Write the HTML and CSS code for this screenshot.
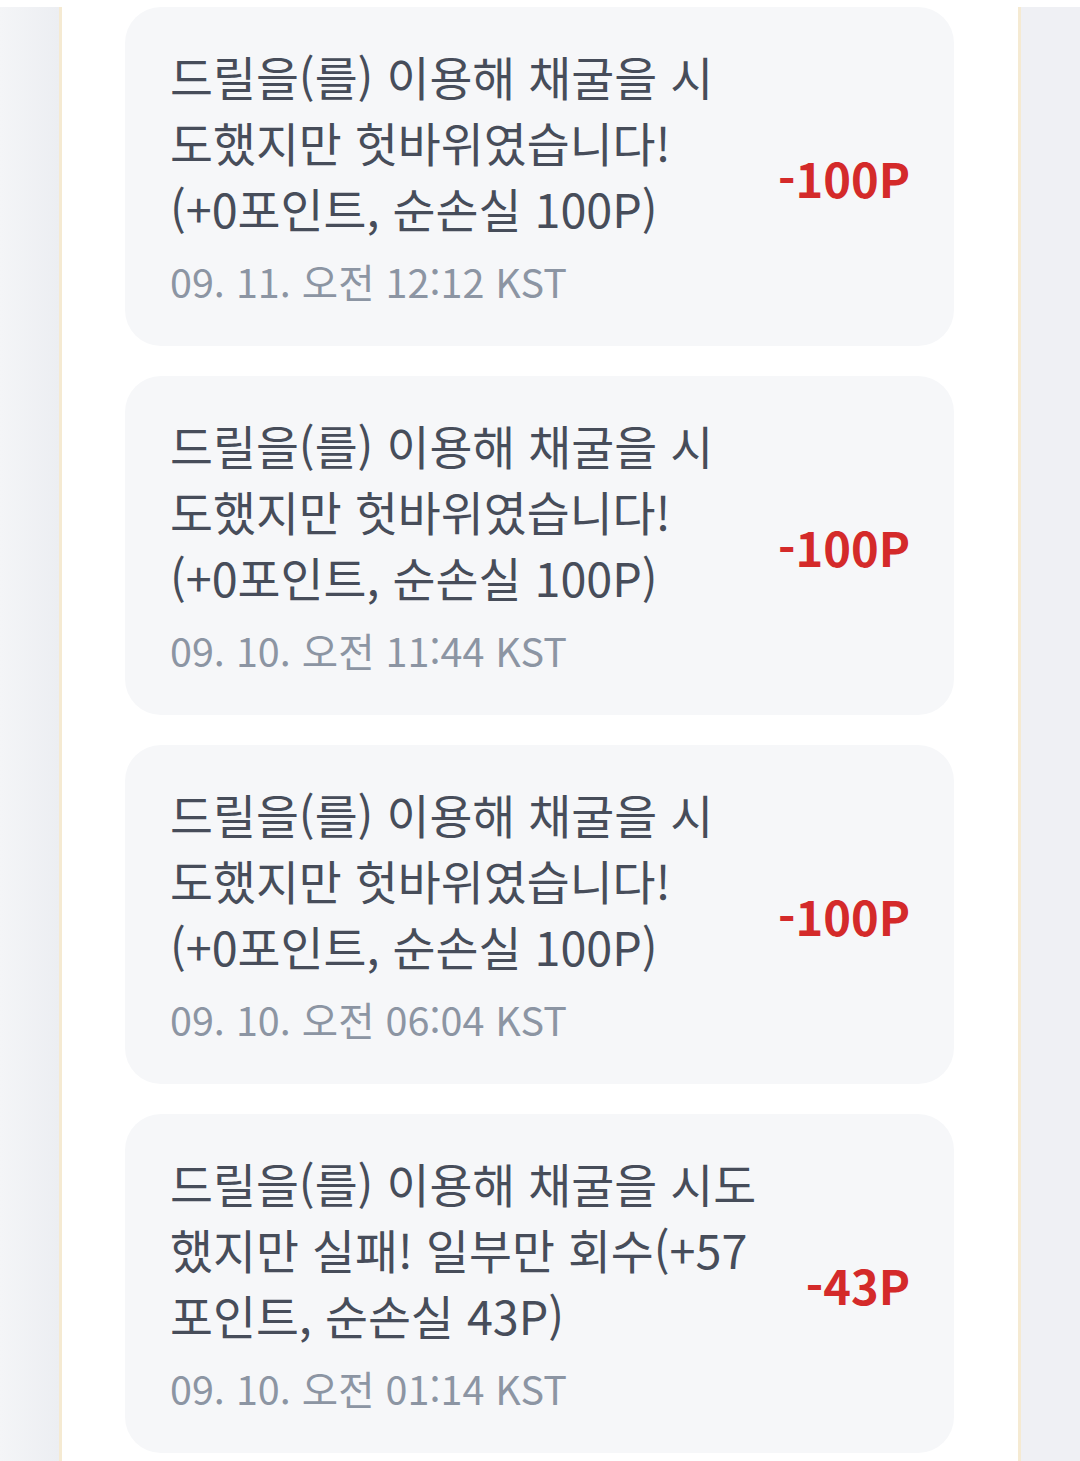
FILE: index.html
```html
<!DOCTYPE html>
<html lang="ko">
<head>
<meta charset="utf-8">
<link rel="stylesheet" href="styles.css">
</head>
<body>
<div class="page">
  <div class="side side-left"></div>
  <main class="column">
    <div class="card">
      <div class="info">
        <p class="msg">드릴을(를) 이용해 채굴을 시도했지만 헛바위였습니다! (+0포인트, 순손실 100P)</p>
        <p class="date">09. 11. 오전 12:12 KST</p>
      </div>
      <div class="amount">-100P</div>
    </div>
    <div class="card">
      <div class="info">
        <p class="msg">드릴을(를) 이용해 채굴을 시도했지만 헛바위였습니다! (+0포인트, 순손실 100P)</p>
        <p class="date">09. 10. 오전 11:44 KST</p>
      </div>
      <div class="amount">-100P</div>
    </div>
    <div class="card">
      <div class="info">
        <p class="msg">드릴을(를) 이용해 채굴을 시도했지만 헛바위였습니다! (+0포인트, 순손실 100P)</p>
        <p class="date">09. 10. 오전 06:04 KST</p>
      </div>
      <div class="amount">-100P</div>
    </div>
    <div class="card">
      <div class="info">
        <p class="msg">드릴을(를) 이용해 채굴을 시도했지만 실패! 일부만 회수(+57포인트, 순손실 43P)</p>
        <p class="date">09. 10. 오전 01:14 KST</p>
      </div>
      <div class="amount">-43P</div>
    </div>
  </main>
  <div class="side side-right"></div>
</div>
</body>
</html>
```

FILE: styles.css
```css
html, body {
  margin: 0;
  padding: 0;
  background: #ffffff;
}
body {
  font-family: "Noto Sans CJK KR", "Noto Sans", sans-serif;
}
.page {
  display: flex;
  padding-top: 7px;
  min-height: 1454px;
}
.side {
  flex: none;
}
.side-left {
  width: 59px;
  background: linear-gradient(to right, #f4f5f7, #eceef2);
}
.side-right {
  flex: 1;
  background: #eff0f4;
}
.column {
  width: 962px;
  flex: none;
  border-left: 3px solid #f5ead2;
  border-right: 3px solid #f5ead2;
  background: #ffffff;
  padding: 0 64px 0 63px;
  box-sizing: border-box;
  display: flex;
  flex-direction: column;
  gap: 30px;
}
.card {
  background: #f6f7f9;
  border-radius: 36px;
  padding: 33px 44px 32px 45px;
  display: flex;
  align-items: center;
  gap: 40px;
  min-height: 339px;
  box-sizing: border-box;
}
.info {
  flex: 1;
  min-width: 0;
}
.msg {
  margin: 0;
  font-size: 46.7px;
  line-height: 66px;
  color: #474d5a;
}
.date {
  margin: 10px 0 0;
  font-size: 39.5px;
  line-height: 60px;
  color: #8c95a3;
}
.amount {
  flex: none;
  font-size: 47px;
  font-weight: 700;
  color: #d42a2a;
}
```
